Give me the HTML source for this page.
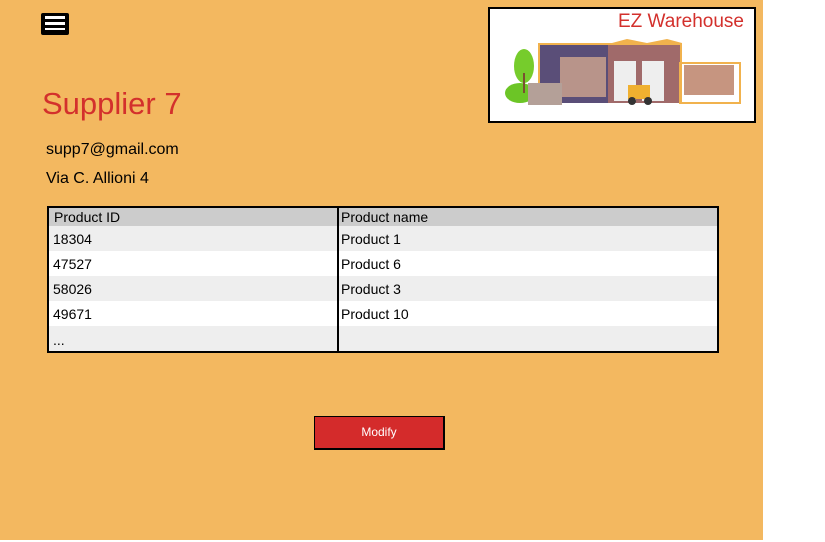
<!DOCTYPE html>
<html><head><style>
body{margin:0;width:825px;height:542px;background:#fff;position:relative;overflow:hidden;font-family:"Liberation Sans",sans-serif}
.bg{position:absolute;left:0;top:0;width:763px;height:540px;background:#f3b860}
.abs{position:absolute}
table{border-collapse:collapse}
td{padding:0}
</style></head><body>
<div class="bg"></div>
<div class="abs" style="left:41px;top:13px;width:28px;height:22px;background:#000;border-radius:2px"></div>
<div class="abs" style="left:45px;top:16px;width:20px;height:3px;background:#fff"></div>
<div class="abs" style="left:45px;top:22px;width:20px;height:3px;background:#fff"></div>
<div class="abs" style="left:45px;top:28px;width:20px;height:2px;background:#fff"></div>
<div class="abs" style="left:42px;top:86px;font-size:31px;color:#d3302c">Supplier 7</div>
<div class="abs" style="left:46px;top:141px;font-size:16px;color:#000">supp7@gmail.com</div>
<div class="abs" style="left:46px;top:170px;font-size:16px;color:#000">Via C. Allioni 4</div>
<div class="abs" style="left:488px;top:7px;width:264px;height:112px;background:#fff;border:2px solid #000">
<div class="abs" style="right:10px;top:2px;font-size:19px;color:#d3302c">EZ Warehouse</div>
<svg class="abs" style="left:12px;top:24px" width="240" height="75">
<ellipse cx="18" cy="60" rx="15" ry="10" fill="#6cc526"/>
<ellipse cx="22" cy="33" rx="10" ry="17" fill="#76cc2c"/>
<rect x="21" y="40" width="2" height="20" fill="#7a5030"/>
<polygon points="36,10 110,10 125,6 145,10 165,6 180,10 180,70 36,70" fill="#f1b24d"/>
<rect x="38" y="12" width="68" height="58" fill="#5a4e78"/>
<rect x="106" y="12" width="72" height="58" fill="#a06a6a"/>
<rect x="58" y="24" width="46" height="40" fill="#b8948a"/>
<rect x="112" y="28" width="22" height="40" fill="#eee"/>
<rect x="140" y="28" width="22" height="40" fill="#eee"/>
<rect x="26" y="50" width="34" height="22" fill="#b4a098"/>
<rect x="126" y="52" width="22" height="14" fill="#f0b030"/>
<circle cx="130" cy="68" r="4" fill="#333"/><circle cx="146" cy="68" r="4" fill="#333"/>
<rect x="178" y="30" width="60" height="40" fill="none" stroke="#f1b24d" stroke-width="2"/>
<rect x="182" y="32" width="50" height="30" fill="#b87a60" opacity=".8"/>
</svg>
</div>
<div class="abs" style="left:47px;top:206px;width:668px;height:143px;border:2px solid #000;overflow:hidden">
<table style="width:100%;font-size:14px">
<tr style="background:#ccc;height:18px"><td style="width:278px;padding:0 5px;border-right:2px solid #000">Product ID</td><td style="padding:0 2px">Product name</td></tr>
<tr style="background:#eee;height:25px"><td style="padding:0 4px;border-right:2px solid #000">18304</td><td style="padding:0 2px">Product 1</td></tr>
<tr style="background:#fff;height:25px"><td style="padding:0 4px;border-right:2px solid #000">47527</td><td style="padding:0 2px">Product 6</td></tr>
<tr style="background:#eee;height:25px"><td style="padding:0 4px;border-right:2px solid #000">58026</td><td style="padding:0 2px">Product 3</td></tr>
<tr style="background:#fff;height:25px"><td style="padding:0 4px;border-right:2px solid #000">49671</td><td style="padding:0 2px">Product 10</td></tr>
<tr style="background:#eee;height:27px"><td style="padding:0 4px;border-right:2px solid #000">...</td><td></td></tr>
</table></div>
<div class="abs" style="left:314px;top:416px;width:128px;height:31px;background:#d42b2b;border:1px solid #000;border-right-width:2px;border-bottom-width:2px;color:#fff;font-size:12px;text-align:center;line-height:31px">Modify</div>
</body></html>
